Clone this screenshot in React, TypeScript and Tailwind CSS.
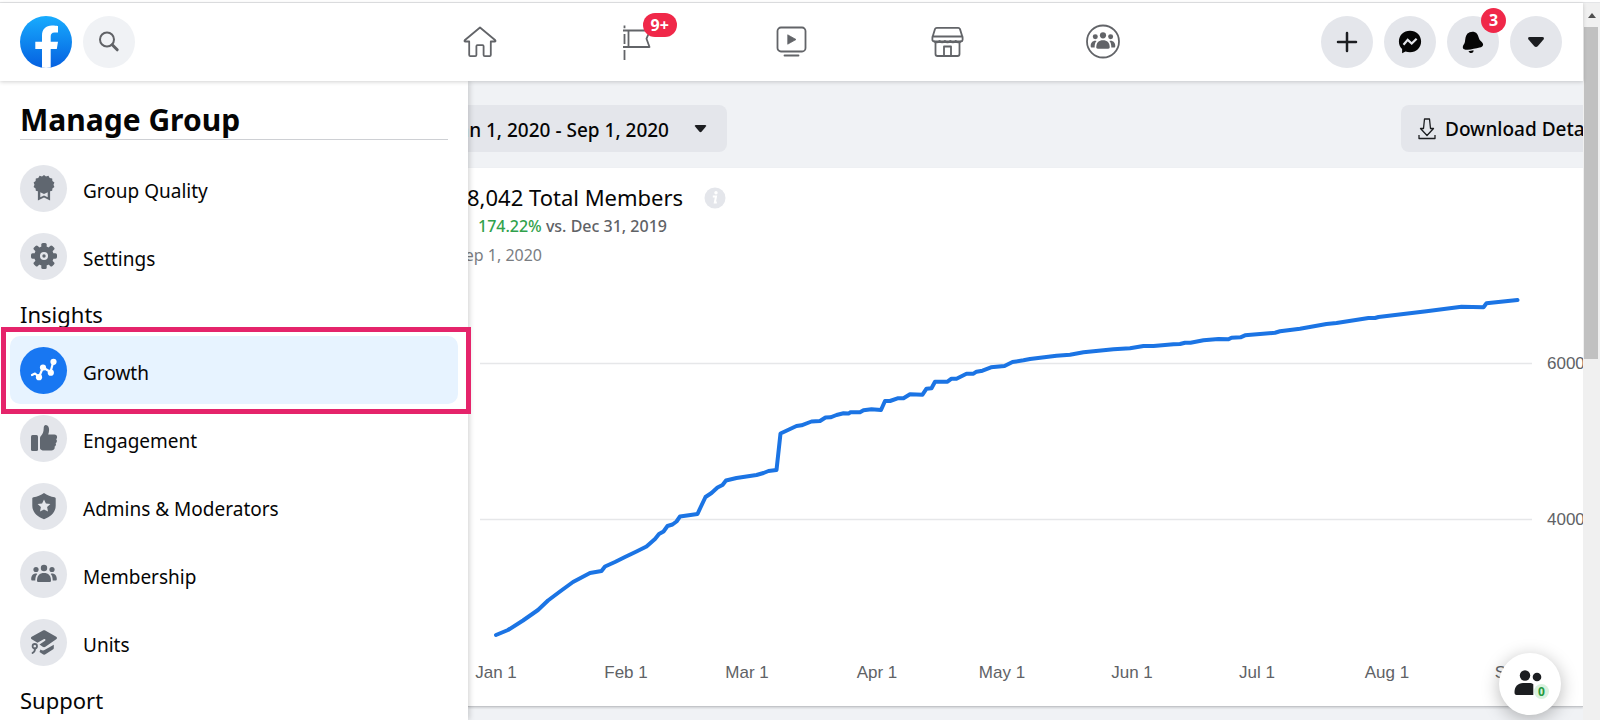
import React from "react";

const FONT = "font-['Noto_Sans','Open_Sans',sans-serif]";

function Logo() {
  return (
    <svg width="52" height="52" viewBox="0 0 52 52" aria-hidden="true">
      <defs>
        <linearGradient id="logo-fill" x1="0" y1="0" x2="0" y2="1">
          <stop offset="0" stopColor="#18acfe" />
          <stop offset="1" stopColor="#0560e0" />
        </linearGradient>
        <clipPath id="logo-clip">
          <circle cx="26" cy="26" r="26" />
        </clipPath>
      </defs>
      <circle cx="26" cy="26" r="26" fill="url(#logo-fill)" />
      <path
        clipPath="url(#logo-clip)"
        fill="#fff"
        d="M22 52V33h-6.7v-7.3H22v-5.9c0-6.600 3.900-10.200 9.900-10.200 2.900 0 6.100.5 6.100.5v6.500h-3.400c-3 0-3.900 1.800-3.900 3.800v5.300h7.300L36.800 33h-6.100v19z"
      />
    </svg>
  );
}

function PeopleShapes() {
  return (
    <>
      <circle cx="13" cy="4" r="3.200" />
      <circle cx="5" cy="5.500" r="2.600" />
      <circle cx="21" cy="5.500" r="2.600" />
      <path d="M6 16.500C6 11.500 8.600 9 13 9s7 2.500 7 7.500c0 1-.6 1.500-1.500 1.500h-11C6.600 18 6 17.500 6 16.500z" />
      <path d="M4.900 9.600C2.200 9.600.2 11.800.2 15c0 1 .4 1.600 1.300 1.600h2.800c0-3 .5-5 2-6.700-.4-.2-.9-.3-1.400-.3z" />
      <path d="M21.100 9.600c2.700 0 4.700 2.200 4.700 5.400 0 1-.4 1.600-1.300 1.600h-2.800c0-3-.5-5-2-6.700.4-.2.900-.3 1.400-.3z" />
    </>
  );
}

const lineProps = {
  fill: "none",
  stroke: "#626468",
  strokeWidth: 1.8,
  strokeLinejoin: "round" as const,
  strokeLinecap: "round" as const,
};

const navItems = [
  {
    label: "Home",
    icon: (
      <svg width="34" height="36" viewBox="0 0 34 36" {...lineProps}>
        <path d="M17 3.500 1.700 16.300c-.5.600-.2 1.200.5 1.200h4V31c0 .8.400 1.200 1.200 1.200h4.800c.8 0 1.200-.4 1.200-1.200v-8.800c0-.7.300-1 1-1h5.200c.7 0 1 .3 1 1V31c0 .8.400 1.200 1.200 1.200h4.800c.8 0 1.200-.4 1.200-1.200V17.500h4c.7 0 1-.6.500-1.200z" />
      </svg>
    ),
  },
  {
    label: "Pages",
    badge: "9+",
    icon: (
      <svg width="34" height="36" viewBox="0 0 34 36" {...lineProps} strokeLinecap="butt">
        <path d="M5.500 1.500v2.800M5.500 10v10M5.500 26v10M4 6.500h27l-3.500 8.200 3 8.300H4M9.500 6.500V23" />
      </svg>
    ),
  },
  {
    label: "Watch",
    icon: (
      <svg width="34" height="36" viewBox="0 0 34 36" {...lineProps}>
        <rect x="2.500" y="3.500" width="28" height="24" rx="3.500" />
        <path d="M9.500 31.500h14" />
        <path d="m13 11 8 4.500-8 4.500z" fill="#626468" strokeWidth="0.800" />
      </svg>
    ),
  },
  {
    label: "Marketplace",
    icon: (
      <svg width="34" height="36" viewBox="0 0 34 36" {...lineProps} strokeWidth="1.800">
        <path d="M5.800 3.800h21.400c1 0 1.500.4 1.800 1.300l2.600 8.400v2.200c0 1-.6 1.600-1.500 1.600H2.900c-.9 0-1.500-.6-1.500-1.600v-2.200L4 5.100c.3-.9.800-1.300 1.800-1.300zM1.500 12.500h30" />
        <path d="M3 17.300c1.800 1.600 4 1.600 5.400-.4 1.500 2 4 2 5.400 0 1.500 2 4 2 5.400 0 1.500 2 4 2 5.400 0 1.500 2 4 2 5.500.4" />
        <path d="M4.500 18.500V30c0 1.200.7 2 2 2h20c1.300 0 2-.8 2-2V18.500M13 32v-9.500h7V32" />
      </svg>
    ),
  },
  {
    label: "Groups",
    icon: (
      <svg width="36" height="36" viewBox="0 0 36 36">
        <circle cx="17" cy="17.500" r="16" fill="none" stroke="#626468" strokeWidth="1.800" />
        <g fill="#626468" transform="translate(4.500 7.500) scale(0.960)">
          <PeopleShapes />
        </g>
      </svg>
    ),
  },
];

const headerActions = [
  {
    label: "Create",
    icon: (
      <svg width="22" height="22" viewBox="0 0 22 22" stroke="#1c1e21" strokeWidth="2.500" strokeLinecap="round">
        <path d="M11 2v18M2 11h18" />
      </svg>
    ),
  },
  {
    label: "Messenger",
    icon: (
      <svg width="24" height="24" viewBox="0 0 24 24">
        <path fill="#050505" d="M12 .8C5.700.8.900 5.300.900 11.500c0 3 1.200 5.600 3.200 7.500v4.200l3.400-1.700c1.400.5 2.900.7 4.500.7 6.300 0 11.100-4.500 11.100-10.700S18.300.8 12 .8z" />
        <path fill="none" stroke="#e4e6eb" strokeWidth="2.200" d="m5.500 14.700 4.200-4.800 4 3.600 4.900-4.800" />
      </svg>
    ),
  },
  {
    label: "Notifications",
    badge: "3",
    icon: (
      <svg width="24" height="24" viewBox="0 0 24 24" fill="#050505">
        <path d="M6.500 3.600C8.600 1.400 13.500.6 16 3.700c1.400 1.800 1.600 4 2.600 6 .8 1.600 3.300 2.400 3.500 4.500.2 2-1.500 2.900-3.500 3.300-3.800.8-8 2.100-12 2.300-2.300.1-4.600-.3-4.800-2.300-.2-2.200 1.700-3.400 2.100-5.500.5-2.800.4-6 2.600-8.400z" />
        <path d="M7.500 21.200c1.500-.1 3.500-.6 5-1 .3 1.300-.7 2.800-2.300 2.800-1.200 0-2.200-.7-2.700-1.800z" />
      </svg>
    ),
  },
  { label: "Account", icon: <Caret className="h-3 w-[18px]" /> },
];

function Caret({ className }: { className: string }) {
  return (
    <svg viewBox="0 0 18 12" className={className} aria-hidden="true">
      <path fill="#1c1e21" d="M2.600 1h12.800c1.500 0 2 1.300 1.100 2.400l-5.800 6.800c-1 1.100-2.400 1.100-3.400 0L1.500 3.400C.6 2.300 1.100 1 2.600 1z" />
    </svg>
  );
}

function Header() {
  return (
    <header className="relative z-30 grid h-[78px] shrink-0 grid-cols-[1fr_auto_1fr] items-center bg-white shadow-[0_1px_4px_rgba(0,0,0,0.18)]">
      <div className="flex items-center gap-[11px] pl-5">
        <a href="#" aria-label="Facebook">
          <Logo />
        </a>
        <button type="button" aria-label="Search" className="grid size-[52px] place-items-center rounded-full bg-[#f0f2f5]">
          <svg width="22" height="22" viewBox="0 0 22 22" fill="none" stroke="#606266">
            <circle cx="9" cy="8.500" r="7" strokeWidth="2" />
            <path d="m14.200 13.800 5 5" strokeWidth="3" strokeLinecap="round" />
          </svg>
        </button>
      </div>
      <nav aria-label="Main" className="flex">
        {navItems.map((item) => (
          <a key={item.label} href="#" aria-label={item.label} className="flex w-[156px] justify-center">
            <span className="relative">
              {item.icon}
              {item.badge && (
                <span className="absolute -top-[11px] left-6 rounded-full bg-[#f02849] px-2 text-base leading-6 font-bold text-white">
                  {item.badge}
                </span>
              )}
            </span>
          </a>
        ))}
      </nav>
      <div className="flex justify-end gap-[11px] pr-[21px]">
        {headerActions.map((item) => (
          <button
            key={item.label}
            type="button"
            aria-label={item.label}
            className="relative grid size-[52px] place-items-center rounded-full bg-[#e4e6eb]"
          >
            {item.icon}
            {item.badge && (
              <span className="absolute -top-2 -right-[7px] size-[25px] rounded-full bg-[#f02849] text-center text-base leading-6 font-bold text-white">
                {item.badge}
              </span>
            )}
          </button>
        ))}
      </div>
    </header>
  );
}

type Item = { label: string; icon: React.ReactNode; active?: boolean };

const manageItems: Item[] = [
  {
    label: "Group Quality",
    icon: (
      <svg width="26" height="28" viewBox="0 0 26 28" fill="#606770">
        <path d="m13 1 2 1.500 2.400-.7 1.300 2.100 2.500.5.200 2.500 2 1.500-.9 2.300.9 2.300-2 1.500-.2 2.300-2.100.5V26.500L13 23.600l-6.100 2.900v-9.200l-2.100-.5-.2-2.300-2-1.500.9-2.300-.9-2.300 2-1.500.2-2.500 2.500-.5 1.300-2.100 2.400.7z" />
        <path fill="#e4e6eb" d="m9.300 18.300 3.700 1.800 3.700-1.800v5L13 21.500l-3.700 1.800z" />
      </svg>
    ),
  },
  {
    label: "Settings",
    icon: (
      <svg width="28" height="28" viewBox="-14 -14 28 28" fill="#606770">
        <circle r="9.800" />
        {[0, 45, 90, 135].map((angle) => (
          <rect key={angle} x="-2.700" y="-13" width="5.400" height="26" rx="1.600" transform={`rotate(${angle})`} />
        ))}
        <circle r="4" fill="#e4e6eb" />
        <circle r="1.700" />
      </svg>
    ),
  },
];

const insightItems: Item[] = [
  {
    label: "Growth",
    active: true,
    icon: (
      <svg width="28" height="24" viewBox="0 0 28 24" fill="#fff">
        <path d="m2 17 3-1.500 4 3.500 4-9.500 7.500 4.500 3-11" fill="none" stroke="#fff" strokeWidth="2.200" strokeLinecap="round" strokeLinejoin="round" />
        <circle cx="9" cy="19.200" r="3.100" />
        <circle cx="13" cy="9.500" r="3.100" />
        <circle cx="20.800" cy="14.700" r="3.100" />
        <circle cx="23.500" cy="3.800" r="3.100" />
      </svg>
    ),
  },
  {
    label: "Engagement",
    icon: (
      <svg width="28" height="28" viewBox="0 0 28 28" fill="#606770">
        <rect x="1" y="11" width="7" height="16" rx="1.500" />
        <path d="M10 14.500c0-1.200.3-2 1.100-2.800 1.700-1.700 2.500-4 2.600-7.500 0-1.800.6-3.200 2.200-3.200 2.200 0 3.200 2.200 3.200 4.800 0 1.700-.4 3.300-.9 4.700h6.200c1.700 0 2.700 1.100 2.700 2.600 0 .9-.3 1.600-.9 2.100.6.500.8 1.200.7 2-.1.900-.6 1.600-1.300 2 .4.500.5 1.200.3 1.900-.2.800-.7 1.400-1.400 1.600.2.400.3.900.2 1.400-.3 1.500-1.600 2.400-3.400 2.400h-7.500c-1.700 0-3-.6-3.800-2z" />
      </svg>
    ),
  },
  {
    label: "Admins & Moderators",
    icon: (
      <svg width="26" height="28" viewBox="0 0 26 28">
        <path fill="#606770" d="M13 1c3 2.300 7 3.800 10.500 4.300.8.100 1.200.6 1.200 1.300v7.200C24.700 20 20 24.800 13 27.200 6 24.800 1.300 20 1.300 13.800V6.600c0-.7.400-1.200 1.200-1.300C6 4.800 10 3.300 13 1z" />
        <path fill="#e4e6eb" d="m13 7.500 1.900 4.100 4.500.5-3.300 3 .9 4.500-4-2.200-4 2.200.9-4.500-3.300-3 4.500-.5z" />
      </svg>
    ),
  },
  {
    label: "Membership",
    icon: (
      <svg width="26" height="20" viewBox="0 0 26 20" fill="#606770">
        <PeopleShapes />
      </svg>
    ),
  },
  {
    label: "Units",
    icon: (
      <svg width="28" height="26" viewBox="0 0 28 26">
        <path fill="#606770" d="M13 1.500c.8-.4 1.500-.4 2.200 0l11 6.200c1 .6 1 1.900 0 2.500l-10.800 7.500c-.9.600-1.800.6-2.700 0L9.500 15.500 15 11.800c1-.7.300-2.200-.9-1.700l-6.600 3.700L1.700 10.200c-1-.6-1-1.900 0-2.500z" />
        <path fill="#606770" d="M10.500 20.500c1.200.9 2.700 1.300 4 .6l9.300-5.400v3.200c0 .8-.3 1.300-1 1.700l-7 4.500c-1.100.7-2.200.7-3.300 0l-3-2z" />
        <circle cx="4.800" cy="17.200" r="2.200" fill="none" stroke="#606770" strokeWidth="1.800" />
        <path d="M5 19.500c.2 2-.8 3.500-2.500 4.500" fill="none" stroke="#606770" strokeWidth="1.800" strokeLinecap="round" />
      </svg>
    ),
  },
];

function SidebarList({ items }: { items: Item[] }) {
  return (
    <ul className="px-[10px]">
      {items.map((item) => (
        <li key={item.label} className="relative">
          <a
            href="#"
            aria-current={item.active ? "page" : undefined}
            className={`flex h-[68px] items-center gap-4 rounded-[10px] px-[10px] ${item.active ? "bg-[#e7f3ff]" : ""}`}
          >
            <span className={`grid size-[47px] shrink-0 place-items-center rounded-full ${item.active ? "bg-[#1877f2]" : "bg-[#e4e6eb]"}`}>
              {item.icon}
            </span>
            <span className="pt-[6px] text-[19px] leading-6 text-[#050505]">{item.label}</span>
          </a>
          {item.active && (
            <span className="pointer-events-none absolute -top-[9px] -right-[13px] -bottom-[10px] -left-[9px] border-[5px] border-[#e5246b]" />
          )}
        </li>
      ))}
    </ul>
  );
}

function Sidebar() {
  const heading = "flex h-[46px] items-center px-5 pt-[2px] text-[22px] leading-7 text-[#050505]";
  return (
    <aside className="relative z-20 w-[468px] shrink-0 bg-white shadow-[1px_0_6px_rgba(0,0,0,0.2)]">
      <h1 className="mx-5 mb-[14px] border-b border-[#ced0d4] pt-[19px] text-[30px] leading-[39px] font-bold text-[#050505]">
        Manage Group
      </h1>
      <SidebarList items={manageItems} />
      <h2 className={heading}>Insights</h2>
      <SidebarList items={insightItems} />
      <h2 className={heading}>Support</h2>
    </aside>
  );
}

const linePoints =
  "496,635 508,630 523,620.5 538,610 548,600.5 560,591.5 573,582 590,573 601.5,571 605,566.5 615,562 625,557 636.5,551.5 646.5,546.5 655,539 659,534 663.5,531.5 667.5,526 672.5,524.5 676.5,521.5 680,516.5 697.5,514 700.5,507.5 705.5,497 711.5,493 717.5,487.5 722.5,485 726,480.5 736.5,478 756.5,475 763.5,473 768.5,471 776.5,470 780.5,433.5 796.5,426 801.5,425.3 811.5,421.5 820,421 825.5,417.5 830.5,417.3 836.5,415 843.5,413.3 848.5,413.6 850.5,412.3 860,412.3 863.5,410.3 871.5,409.3 881,410 885,401 890,401 897.5,398.3 903.5,398.3 910,394.3 922.5,394.7 926.5,388.7 931.5,388.3 935,381.7 947.5,381.7 951.5,378.7 956.5,378.7 966.5,373.7 973.5,373.7 976.5,371.7 982.5,370.7 991,367.3 1004.5,366 1012.5,362 1023.5,360.3 1030,359 1056.5,355.7 1070,354.7 1083.5,352.3 1113.5,349.3 1130,348.3 1143.5,346 1153.5,346 1173.5,344.3 1180,344 1185,342.7 1190.5,342.7 1203.5,340.3 1218.5,339 1228.5,339.3 1231.5,337.7 1240.5,337.3 1245,335.3 1275,332.7 1280,331.3 1300,328.7 1326.5,324 1336.5,323 1368.5,318 1375,318 1378.5,317 1426.5,311.3 1461.5,306.7 1483.5,307.3 1486.5,303.3 1517.5,300";

const months: [string, number][] = [
  ["Jan 1", 496],
  ["Feb 1", 626],
  ["Mar 1", 747],
  ["Apr 1", 877],
  ["May 1", 1002],
  ["Jun 1", 1132],
  ["Jul 1", 1257],
  ["Aug 1", 1387],
  ["Sep 1", 1517],
];

function GrowthChart() {
  return (
    <svg viewBox="468 276 1115 430" role="img" aria-label="Total members by day" className="block w-full font-['Liberation_Sans',Arial,sans-serif] text-[17px]">
      <path d="M480 363.500h1052M480 519.500h1052" stroke="#e6e7e9" strokeWidth="1.500" />
      <polyline points={linePoints} fill="none" stroke="#1b74e4" strokeWidth="4" strokeLinejoin="round" strokeLinecap="round" />
      <g fill="#606266">
        <text x="1547" y="369">6000</text>
        <text x="1547" y="525">4000</text>
        {months.map(([label, x]) => (
          <text key={label} x={x} y="678" textAnchor="middle">
            {label}
          </text>
        ))}
      </g>
    </svg>
  );
}

function Insights() {
  return (
    <main className="relative min-w-0 flex-1 overflow-hidden bg-[#f0f2f5]">
      <div className="-mr-[58px] -ml-20 flex h-[87px] items-center justify-between pt-[8px]">
        <button type="button" className="flex h-[47px] w-[339px] items-center justify-end gap-[25px] rounded-lg bg-[#e4e6eb] pr-5 text-[19px] font-medium text-[#050505]">
          <span className="pt-[3px]">Jan 1, 2020 - Sep 1, 2020</span>
          <Caret className="h-[9px] w-[13px]" />
        </button>
        <button type="button" className="flex h-[47px] w-60 items-center gap-[9px] rounded-lg bg-[#e4e6eb] pl-[17px] text-[19px] font-medium whitespace-nowrap text-[#050505]">
          <svg width="18" height="22" viewBox="0 0 18 22" fill="none" stroke="#1c1e21" strokeWidth="1.300" strokeLinejoin="round">
            <path d="M6.500 1h5l1 9.500h3L9 17.500l-6.500-7h3zM1 17v3.500h16V17" />
          </svg>
          <span className="pt-[2px]">Download Details</span>
        </button>
      </div>
      <section className="border-b border-[#c3c5c9] bg-white pt-[14px] shadow-[0_1px_2px_rgba(0,0,0,0.15)]">
        <div className="-ml-px flex items-center gap-[21px]">
          <h2 className="text-[22px] leading-[31px] text-[#050505]">8,042 Total Members</h2>
          <svg width="22" height="22" viewBox="0 0 22 22" role="img" aria-label="More information">
            <circle cx="11" cy="11" r="10.500" fill="#e4e6eb" />
            <circle cx="12" cy="5.800" r="1.700" fill="#fff" />
            <path d="M8.800 9.600h3.200l-1.200 6h2" fill="none" stroke="#fff" strokeWidth="2" />
          </svg>
        </div>
        <p className="pl-[10px] text-base leading-[26px] font-medium text-[#606266]">
          <span className="text-[#31a24c]">174.22%</span> vs. Dec 31, 2019
        </p>
        <p className="-ml-[12px] pt-[3px] pb-2 text-base leading-[26px] text-[#7a7d82]">Sep 1, 2020</p>
        <GrowthChart />
      </section>
      <button type="button" aria-label="Online members" className="absolute right-[22px] bottom-[5px] grid size-[62px] place-items-center rounded-full bg-white shadow-[0_4px_18px_rgba(0,0,0,0.28)]">
        <svg width="36" height="30" viewBox="0 0 36 30" fill="#1c1e21">
          <circle cx="13" cy="6.500" r="5.200" />
          <circle cx="25" cy="8" r="4.300" />
          <path d="M2.500 23c0-5.500 3.500-9 8.500-9h6c2 0 3.500.5 4.300 1.300V26H4.500c-1.300 0-2-.8-2-3z" />
        </svg>
        <span className="absolute right-3 bottom-4 size-[15px] rounded-full bg-[#d9f2df] text-center text-xs leading-[15px] font-bold text-[#249a40]">0</span>
      </button>
    </main>
  );
}

function ScrollTrack() {
  return (
    <div aria-hidden="true" className="w-[17px] shrink-0 bg-[#f0f0f0] px-px">
      <div className="grid h-6 place-items-center">
        <svg width="8" height="5" viewBox="0 0 8 5">
          <path d="M0 5 4 0l4 5z" fill="#505050" />
        </svg>
      </div>
      <div className="mr-px h-[332px] bg-[#c1c1c1]" />
    </div>
  );
}

export default function App() {
  return (
    <div className={`flex h-screen flex-col overflow-hidden bg-white pt-[2px] ${FONT}`}>
      <div className="flex min-h-0 flex-1 border-t border-[#e4e5e7]">
        <div className="flex min-w-0 flex-1 flex-col">
          <Header />
          <div className="flex min-h-0 flex-1">
            <Sidebar />
            <Insights />
          </div>
        </div>
        <ScrollTrack />
      </div>
    </div>
  );
}
